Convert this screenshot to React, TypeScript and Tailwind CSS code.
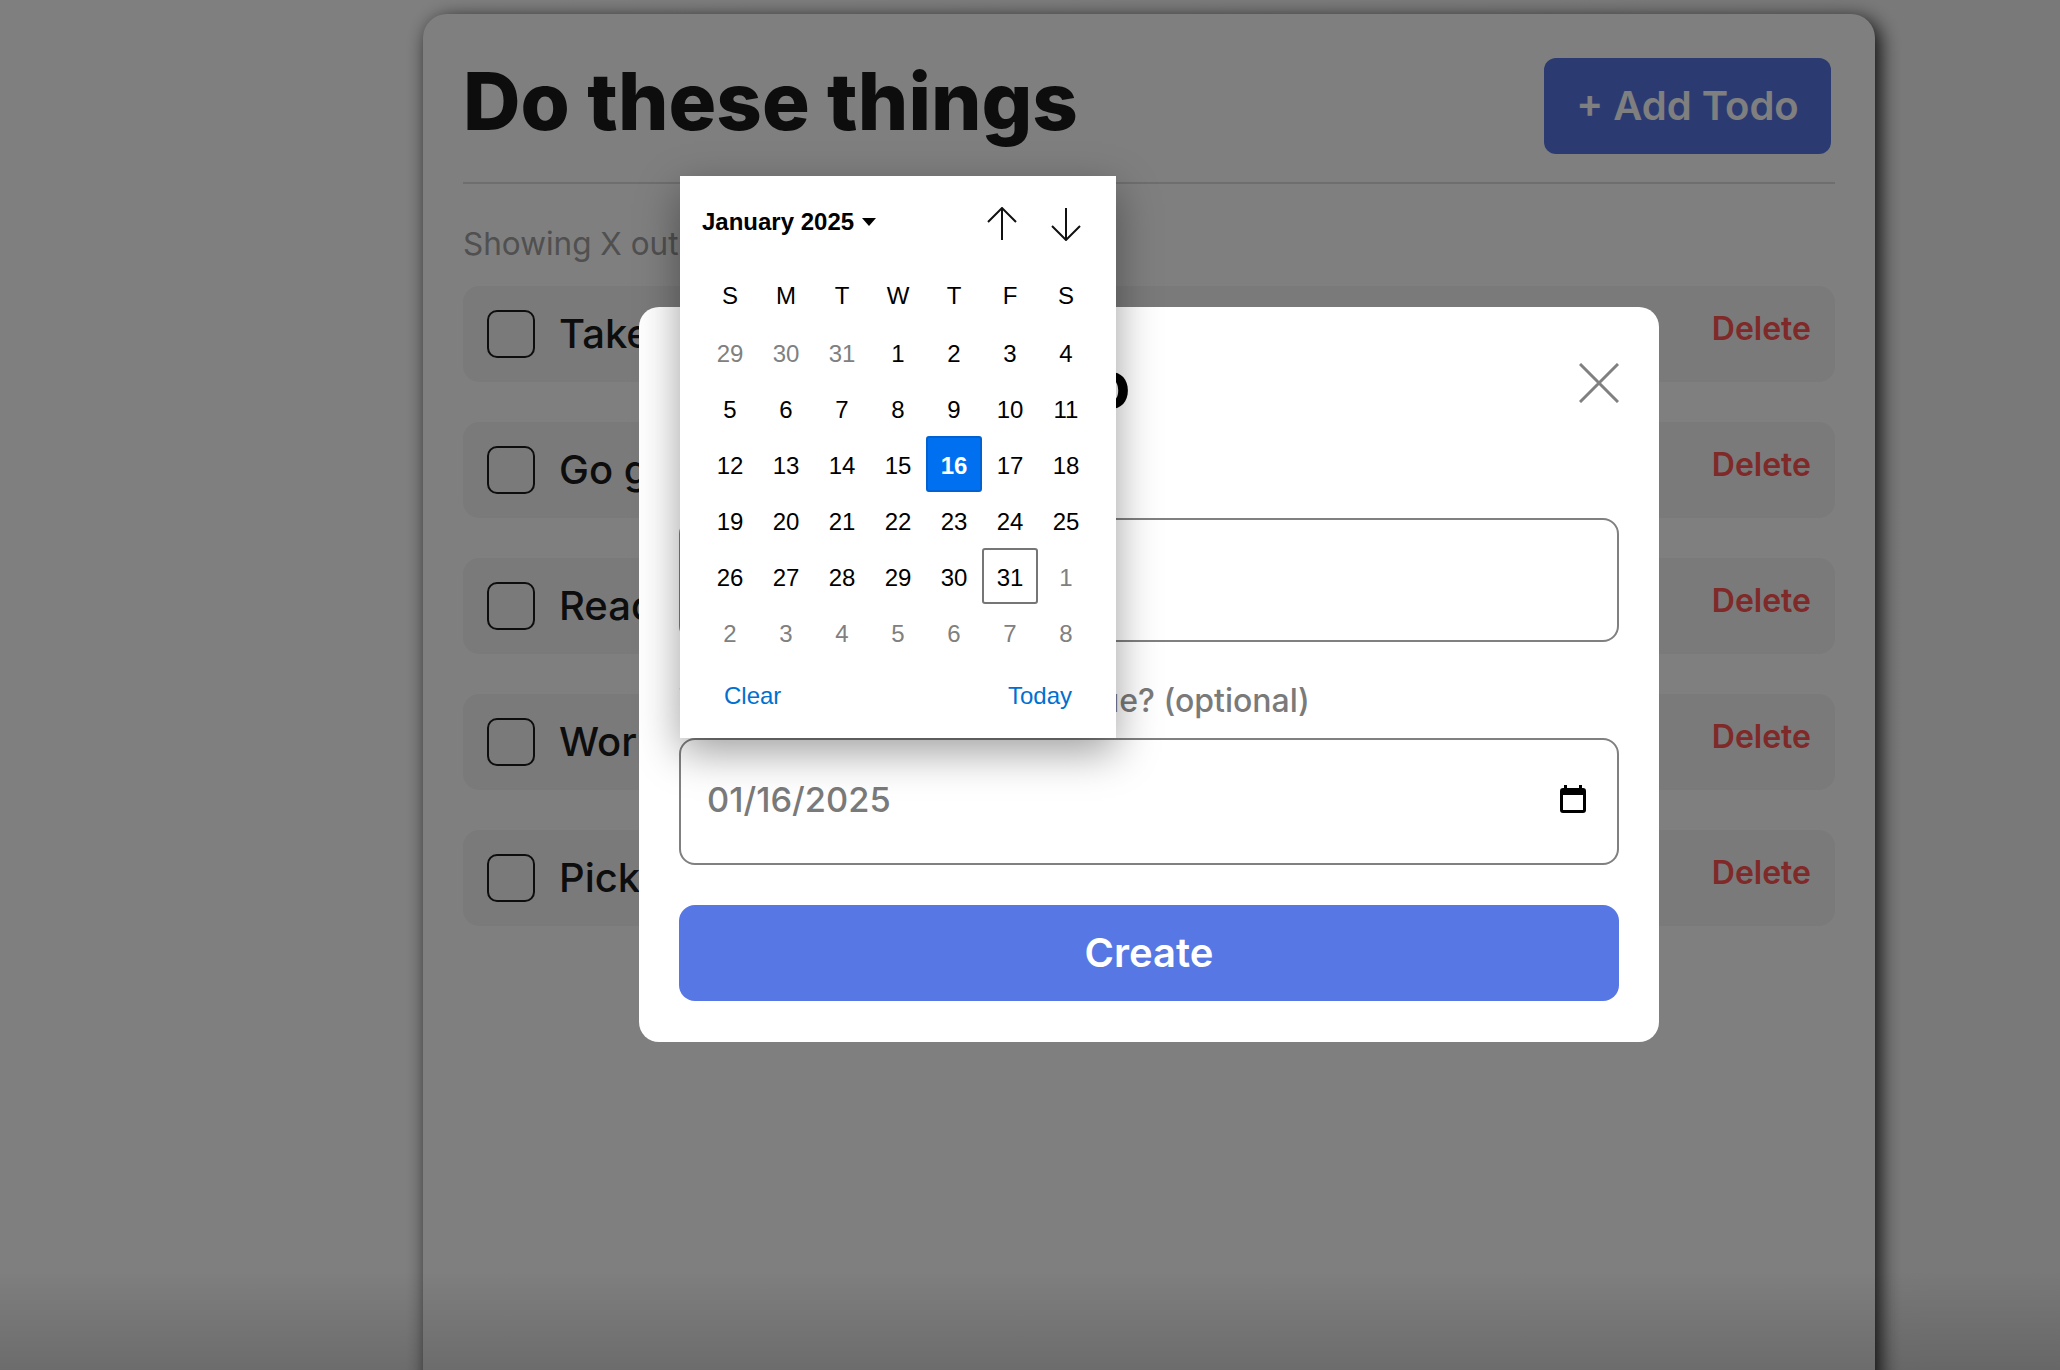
import React from "react";

const sans = "font-['Inter',sans-serif]";
const arial = "font-['Liberation_Sans',Arial,sans-serif]";

const todos = ["Take out the trash", "Go grocery shopping", "Read a book", "Work out", "Pick up the kids"];

const weeks = [
  ["29", "30", "31", "1", "2", "3", "4"],
  ["5", "6", "7", "8", "9", "10", "11"],
  ["12", "13", "14", "15", "16", "17", "18"],
  ["19", "20", "21", "22", "23", "24", "25"],
  ["26", "27", "28", "29", "30", "31", "1"],
  ["2", "3", "4", "5", "6", "7", "8"],
];

function Calendar() {
  return (
    <div className={`absolute left-[1px] top-[-562px] z-10 w-[436px] h-[562px] bg-white shadow-[0_14px_40px_rgba(0,0,0,0.38)] px-[22px] ${arial} text-black`}>
      <div className="flex items-center h-[91px]">
        <span className="text-[24px] font-bold">January 2025</span>
        <svg width="14" height="8" viewBox="0 0 14 8" className="ml-[8px]"><path d="M0 0h14L7 8z" fill="#000" /></svg>
        <div className="flex-1" />
        <svg width="30" height="34" viewBox="0 0 30 34" className="mr-[34px] mt-[4px]" fill="none" stroke="#111" strokeWidth="2"><path d="M15 33V1M1 15 15 1l14 14" /></svg>
        <svg width="30" height="34" viewBox="0 0 30 34" className="mr-[13px] mt-[4px]" fill="none" stroke="#111" strokeWidth="2"><path d="M15 1v32M1 19l14 14 14-14" /></svg>
      </div>
      <div className="grid grid-cols-7 text-[24px] mb-[1px]">
        {["S", "M", "T", "W", "T", "F", "S"].map((d, i) => (
          <div key={i} className="h-[56px] pt-[2px] flex items-center justify-center">{d}</div>
        ))}
      </div>
      <div className="grid grid-cols-7 text-[24px]">
        {weeks.map((w, wi) =>
          w.map((d, i) => {
            const muted = (wi === 0 && i < 3) || (wi === 4 && i === 6) || wi === 5;
            const sel = wi === 2 && i === 4;
            const today = wi === 4 && i === 5;
            return (
              <div
                key={`${wi}-${i}`}
                className={`h-[56px] pt-[3px] flex items-center justify-center rounded-[3px] ${muted ? "text-[#808080]" : ""} ${sel ? "bg-[#0070f0] border-2 border-[#0062d0] text-white font-bold" : ""} ${today ? "border-2 border-[#767676]" : ""}`}
              >
                {d}
              </div>
            );
          })
        )}
      </div>
      <div className="flex justify-between text-[24px] text-[#0070d0] px-[22px] mt-[18px]">
        <span>Clear</span>
        <span>Today</span>
      </div>
    </div>
  );
}

export default function App() {
  return (
    <div className={`relative h-[1370px] overflow-hidden bg-gradient-to-r from-white from-[20%] to-[#f2f2f2] ${sans}`}>
      <div className="pt-[14px] pl-[423px] h-full">
        <div className="w-[1452px] h-[1500px] rounded-[24px] bg-white shadow-[5px_5px_20px_rgba(0,0,0,0.9)] px-[40px]">
          <div className="flex items-start justify-between h-[170px] border-b-2 border-[#ddd]">
            <h1 className="text-[79.6px] leading-[96px] font-extrabold text-[#1a1a1a] mt-[39px]">Do these things</h1>
            <button className="mt-[44px] mr-[4px] w-[287px] h-[96px] rounded-[12px] bg-[#5777e4] text-white text-[40px] font-semibold">+ Add Todo</button>
          </div>
          <p className="text-[31.5px] leading-[40px] text-[#a0a0a0] mt-[40px]">Showing X out of Y todos</p>
          <div className="flex flex-col gap-[40px] mt-[22px]">
            {todos.map((t) => (
              <div key={t} className="h-[96px] rounded-[16px] bg-[#f4f4f4] flex items-center px-[24px]">
                <span className="w-[48px] h-[48px] rounded-[10px] border-2 border-[#1a1a1a] mr-[24px]" />
                <span className="text-[40px] font-medium text-[#1a1a1a] flex-1">{t}</span>
                <button className="text-[32px] font-semibold text-[#ff5252] mb-[10px]">Delete</button>
              </div>
            ))}
          </div>
        </div>
      </div>

      <div className="absolute inset-0 bg-black/50" />
      <div className="absolute inset-x-0 bottom-0 h-[100px] bg-gradient-to-t from-black/15 to-transparent" />

      <div className="absolute left-[639px] top-[307px] w-[1020px] h-[735px] rounded-[20px] bg-white p-[40px]">
        <div className="flex items-start justify-between h-[84px]">
          <h2 className="text-[65.2px] leading-[76px] font-bold text-black">Create A Todo</h2>
          <svg width="40" height="40" viewBox="0 0 40 40" className="mt-[16px]" fill="none" stroke="#808080" strokeWidth="3"><path d="M1 1l38 38M39 1 1 39" /></svg>
        </div>
        <label className="block text-[32px] text-[#7a7a7a] font-medium mt-[30px] leading-[40px]">Title</label>
        <div className="mt-[17px] h-[124px] rounded-[16px] border-2 border-[#808080]" />
        <label className="block text-[32px] text-[#7a7a7a] font-medium mt-[39px] leading-[40px]">What day will this todo be due? (optional)</label>
        <div className="relative mt-[17px]">
          <div className="h-[127px] rounded-[16px] border-2 border-[#808080] flex items-center justify-between px-[26px]">
            <span className="text-[34.4px] font-medium text-[#7a7a7a] mb-[3px]">01/16/2025</span>
            <svg width="26" height="28" viewBox="0 0 26 28" className="mr-[5px] mb-[5px]"><path d="M4 0h3v3h12V0h3v3h1a3 3 0 0 1 3 3v19a3 3 0 0 1-3 3H3a3 3 0 0 1-3-3V6a3 3 0 0 1 3-3h1zM3 10v15h20V10z" fill="#000" /></svg>
          </div>
          <Calendar />
        </div>
        <button className="mt-[40px] w-full h-[96px] rounded-[16px] bg-[#5777e4] text-white text-[40px] font-semibold">Create</button>
      </div>
    </div>
  );
}
